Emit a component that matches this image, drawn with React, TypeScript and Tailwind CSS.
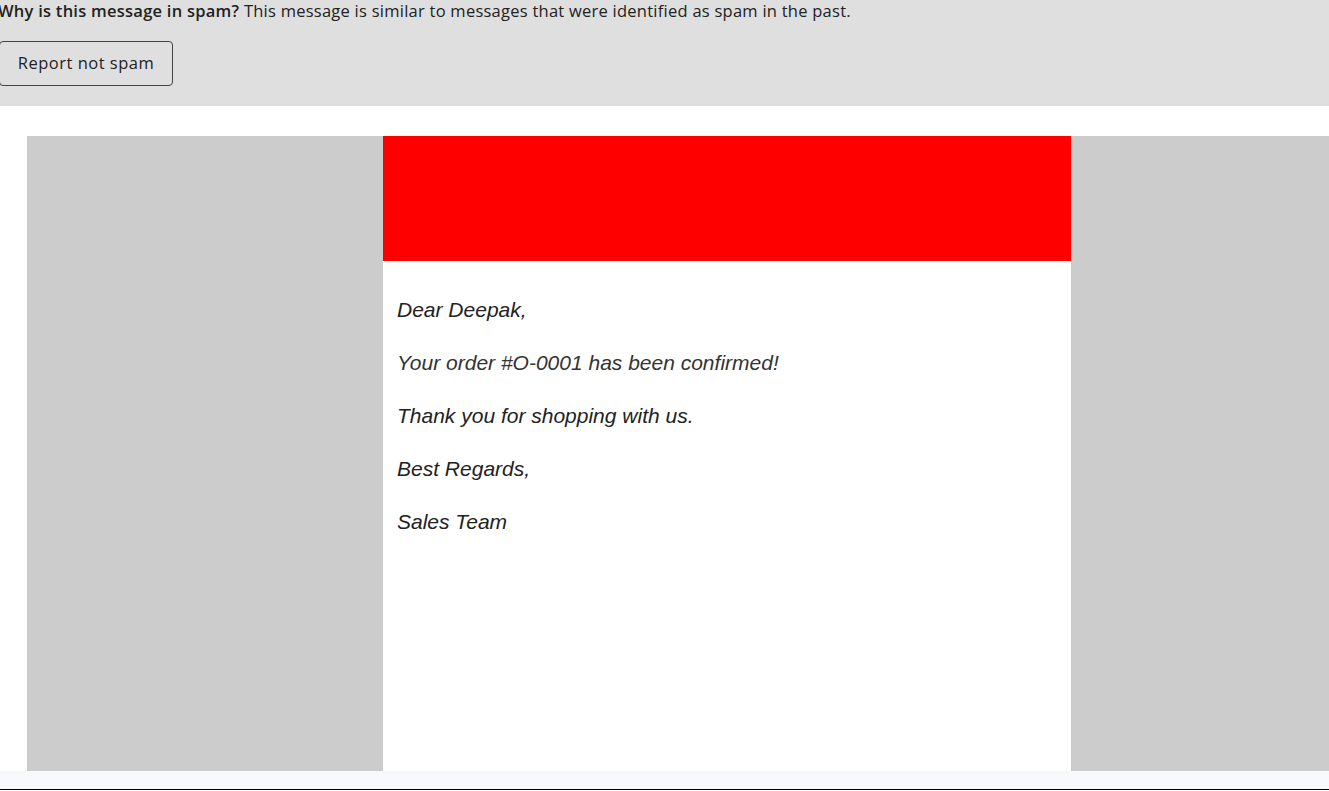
import React from 'react';

function SpamBanner() {
  return (
    <div className="bg-[#dfdfdf] h-[106px] font-['Open_Sans',sans-serif] text-[#222]">
      <p className="-ml-[2px] text-[16.5px] leading-[21px] tracking-[0.25px]">
        <span className="font-semibold">Why is this message in spam?</span> This message is similar to messages that were identified as spam in the past.
      </p>
      <button className="mt-[20px] h-[45px] w-[174px] rounded-[4px] border border-[#444] text-[16.5px] font-medium text-[#222] -ml-[1px] tracking-[0.5px]">
        Report not spam
      </button>
    </div>
  );
}

function EmailBody() {
  return (
    <div className="pt-[30px] pl-[27px] overflow-hidden bg-white">
      <div className="w-[1400px] bg-[#cccccc] flex justify-center">
        <div className="w-[688px] bg-white h-[635px]">
          <div className="h-[125px] bg-[#ff0000]" />
          <div className="px-[14px] pt-[37px] font-['Liberation_Sans',Arial,sans-serif] italic text-[21px] leading-[24px] text-[#222]">
            <p className="mb-[29px]">Dear Deepak,</p>
            <p className="mb-[29px] text-[#333]">Your order #O-0001 has been confirmed!</p>
            <p className="mb-[29px]">Thank you for shopping with us.</p>
            <p className="mb-[29px]">Best Regards,</p>
            <p>Sales Team</p>
          </div>
        </div>
      </div>
    </div>
  );
}

export default function App() {
  return (
    <div className="w-[1329px] h-[791px] overflow-hidden bg-white">
      <SpamBanner />
      <EmailBody />
      <div className="h-[18px] bg-[#f8f9fc]" />
      <div className="h-[1px] bg-black" />
    </div>
  );
}
